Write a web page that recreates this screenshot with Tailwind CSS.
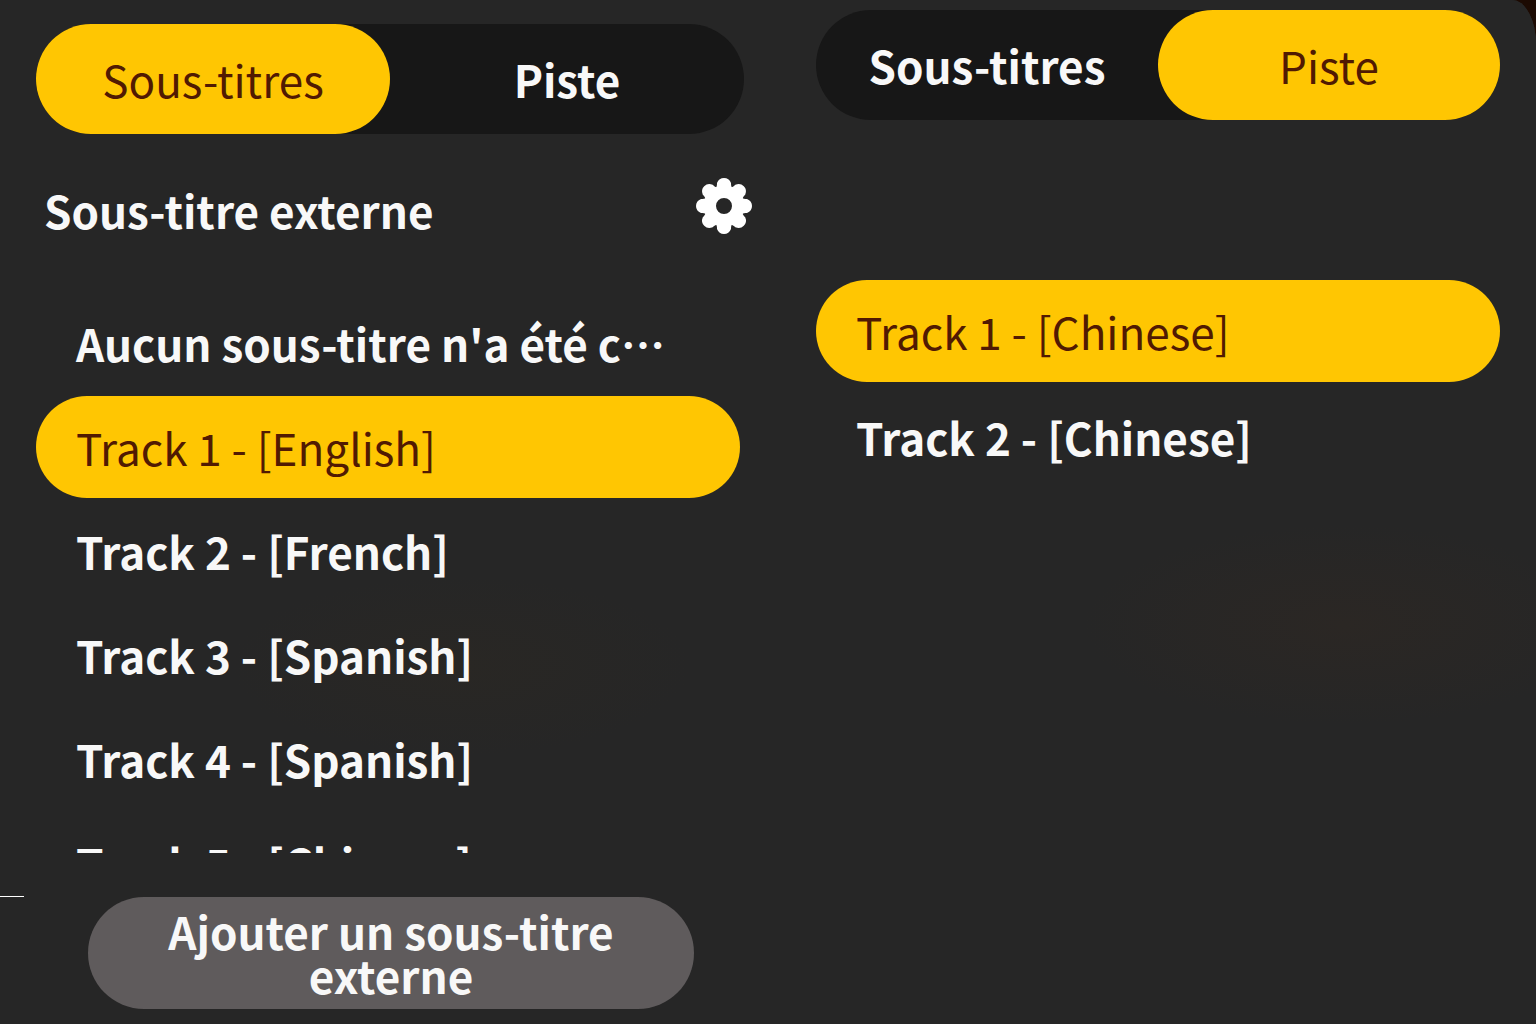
<!DOCTYPE html>
<html lang="fr">
<head>
<meta charset="utf-8">
<meta name="viewport" content="width=device-width, initial-scale=1">
<title>Sous-titres et pistes</title>
<script src="https://cdn.jsdelivr.net/npm/@tailwindcss/browser@4"></script>
</head>
<body class="bg-[#1c0a02] font-['Noto_Sans_CJK_SC',sans-serif] text-[44px] leading-[44px] font-bold text-[#f8f8f8]">
<main class="relative grid min-h-screen grid-cols-2 overflow-hidden rounded-tr-[24px_44px] bg-[#262626]">

  <section class="flex flex-col bg-[radial-gradient(ellipse_230px_90px_at_60%_65%,#292724,#262626)] pt-6 pr-6 pl-9" aria-label="Sous-titres">
    <div class="grid h-[110px] grid-cols-2 rounded-full bg-[#171717]" role="tablist">
      <button role="tab" aria-selected="true" class="rounded-full bg-[#ffc602] font-normal text-[#511a02]">Sous-titres</button>
      <button role="tab" aria-selected="false" class="rounded-full">Piste</button>
    </div>
    <div class="mt-8 flex h-[80px] items-center justify-between pl-2">
      <h2 class="pt-2">Sous-titre externe</h2>
      <button aria-label="Réglages" class="-mr-2">
        <svg class="size-14" viewBox="-28 -28 56 56" fill="#ffffff" aria-hidden="true">
          <defs><path id="tooth" d="M-9-17C-7-19-7-21-7-23Q-5-28 0-28Q5-28 7-23C7-21 7-19 9-17Z"/></defs>
          <path fill-rule="evenodd" d="M0-20A20 20 0 1 1 0 20A20 20 0 1 1 0-20ZM0-8A8 8 0 1 0 0 8A8 8 0 1 0 0-8Z"/>
          <use href="#tooth"/><use href="#tooth" transform="rotate(45)"/><use href="#tooth" transform="rotate(90)"/><use href="#tooth" transform="rotate(135)"/><use href="#tooth" transform="rotate(180)"/><use href="#tooth" transform="rotate(225)"/><use href="#tooth" transform="rotate(270)"/><use href="#tooth" transform="rotate(315)"/>
        </svg>
      </button>
    </div>
    <ul class="mt-[46px] mr-1 h-[561px] overflow-hidden">
      <li class="h-[104px]"><button class="h-[102px] w-full rounded-full px-10 text-left whitespace-nowrap">Aucun sous-titre n'a été c<span lang="zh-CN">⋯</span></button></li>
      <li class="h-[104px]"><button class="h-[102px] w-full rounded-full bg-[#ffc602] px-10 text-left font-normal text-[#511a02]">Track 1 - [English]</button></li>
      <li class="h-[104px]"><button class="h-[102px] w-full px-10 text-left">Track 2 - [French]</button></li>
      <li class="h-[104px]"><button class="h-[102px] w-full px-10 text-left">Track 3 - [Spanish]</button></li>
      <li class="h-[104px]"><button class="h-[102px] w-full px-10 text-left">Track 4 - [Spanish]</button></li>
      <li class="h-[104px]"><button class="h-[102px] w-full px-10 text-left">Track 5 - [Chinese]</button></li>
    </ul>
    <button class="mt-11 mr-[50px] ml-[52px] h-[112px] rounded-full bg-[#5f5b5c] px-16">Ajouter un sous-titre externe</button>
  </section>

  <section class="flex flex-col bg-[radial-gradient(ellipse_260px_100px_at_75%_61%,#2b2724,#262626)] pt-[10px] pr-9 pl-12" aria-label="Piste">
    <div class="grid h-[110px] grid-cols-2 rounded-full bg-[#171717]" role="tablist">
      <button role="tab" aria-selected="false" class="rounded-full">Sous-titres</button>
      <button role="tab" aria-selected="true" class="rounded-full bg-[#ffc602] font-normal text-[#511a02]">Piste</button>
    </div>
    <ul class="mt-40">
      <li class="h-[106px]"><button class="h-[102px] w-full rounded-full bg-[#ffc602] px-10 text-left font-normal text-[#511a02]">Track 1 - [Chinese]</button></li>
      <li class="h-[106px]"><button class="h-[102px] w-full px-10 text-left">Track 2 - [Chinese]</button></li>
    </ul>
  </section>

  <div class="absolute top-[896px] left-0 h-px w-6 bg-white"></div>
</main>
</body>
</html>
